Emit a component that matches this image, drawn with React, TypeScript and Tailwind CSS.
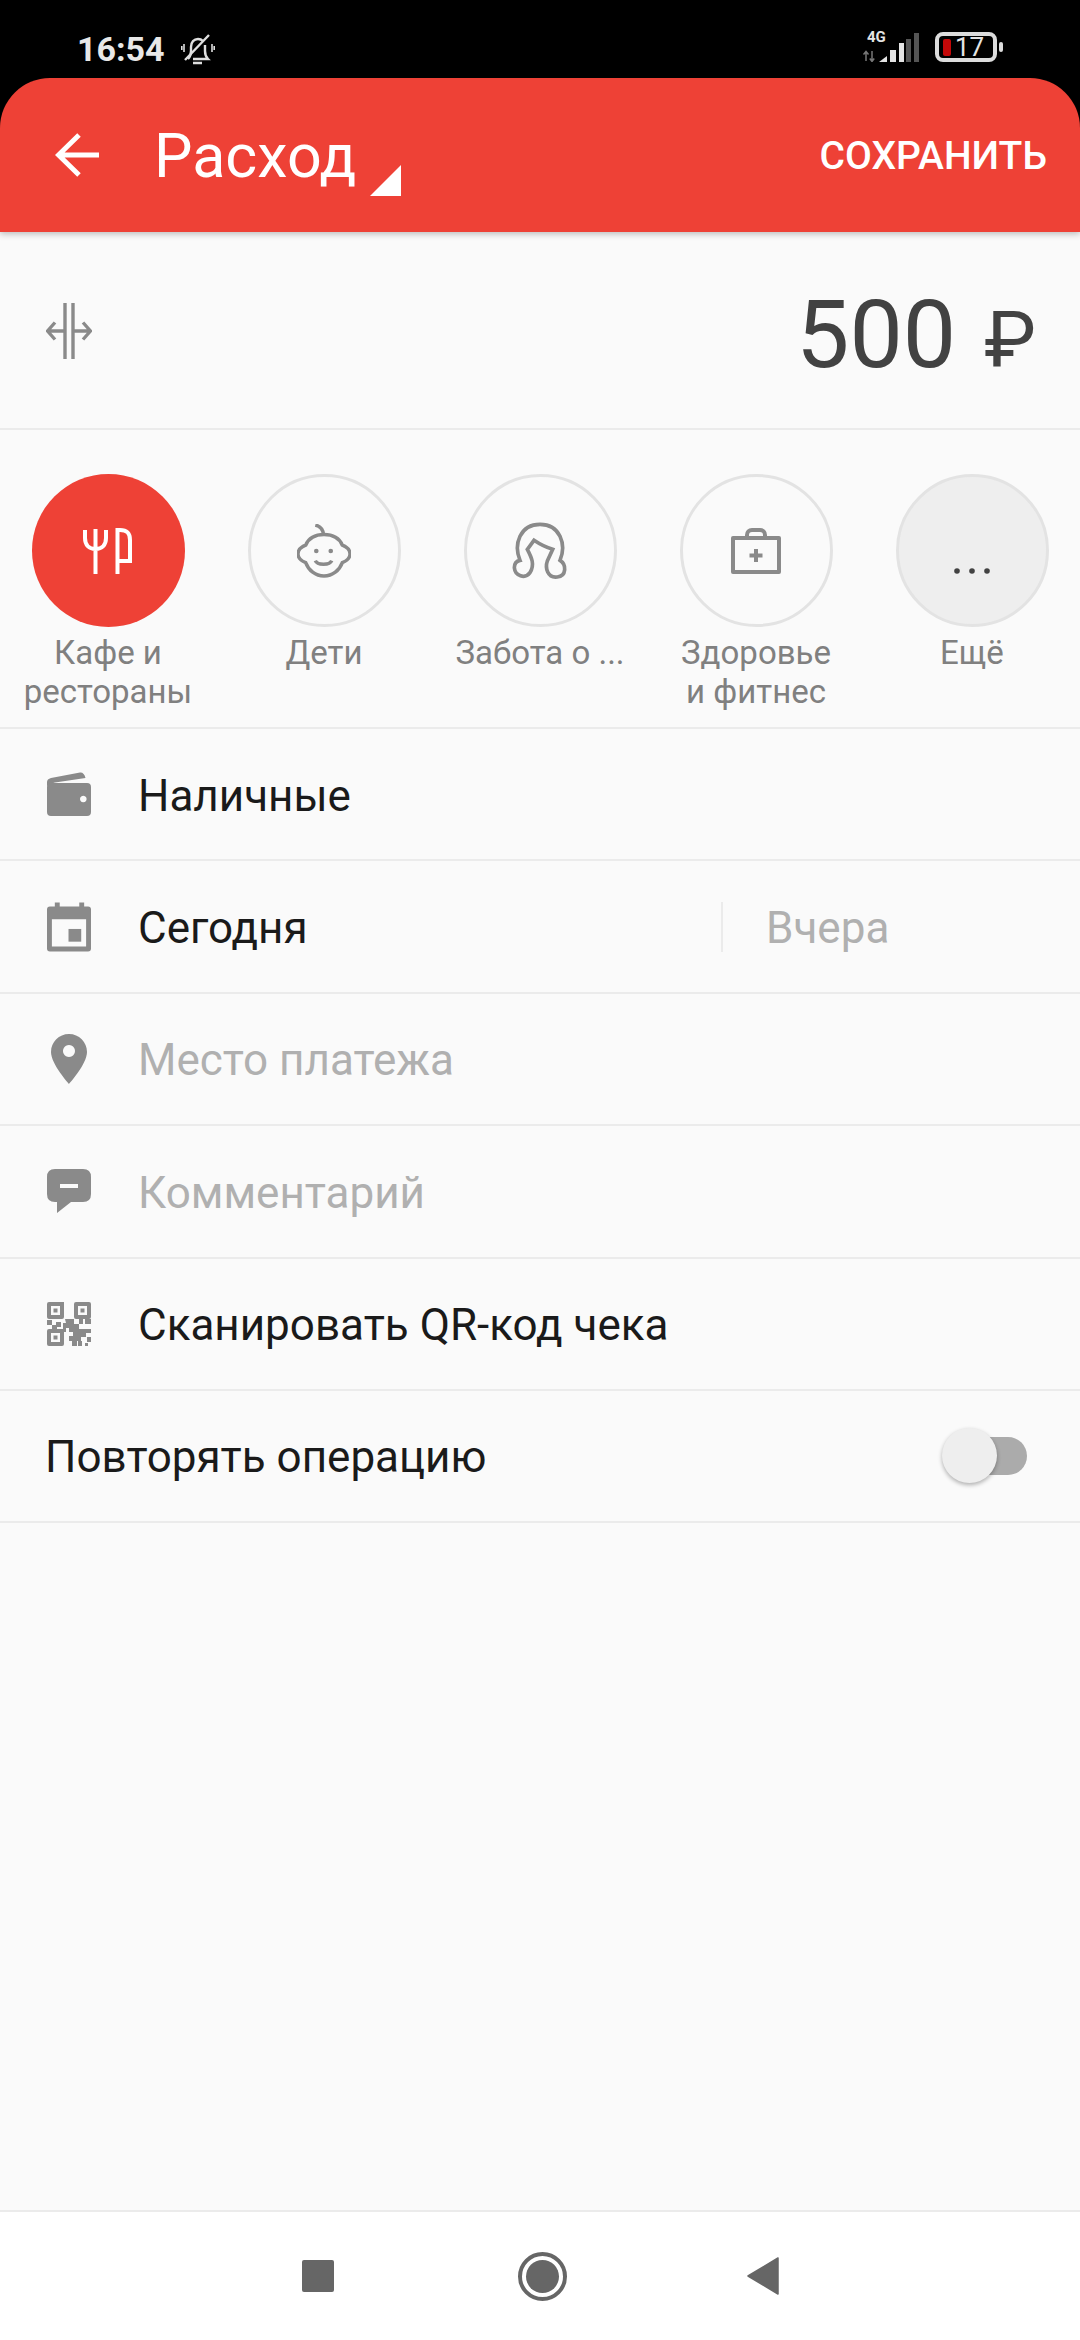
import type { ReactNode } from 'react';

const Back = () => (
  <svg width="44" height="44" viewBox="0 0 44 44" fill="none" stroke="#fff" strokeWidth="5">
    <path d="M44 22H4M24 2L3.5 22L24 42" />
  </svg>
);

const BellMuted = () => (
  <svg width="34" height="33" viewBox="0 0 34 33" fill="none" stroke="#dedede" strokeWidth="2.4">
    <path d="M7 26c2-2 3-4 3-8v-4c0-5 3-8 7-8 2 0 4 1 5 2M24 12v6c0 4 1 6 3 8H12" />
    <path d="M12 30h9M4 27L28 2" />
    <path d="M3 11v8M0.8 13v4M31 11v8M33.2 13v4" strokeWidth="1.6" />
  </svg>
);

const Signal = () => (
  <svg width="58" height="29" viewBox="0 0 58 29" className="block">
    <path d="M4 19v9M1.5 21.5L4 18.5l2.5 3" stroke="#777" strokeWidth="1.5" fill="none" />
    <path d="M10 18v10M7.8 25.5L10 28.5l2.2-3" stroke="#777" strokeWidth="1.5" fill="none" />
    <path d="M17 29l8-6v6z" fill="#e4e4e4" />
    <rect x="28" y="17" width="6" height="12" fill="#e4e4e4" />
    <rect x="37" y="10" width="5" height="19" fill="#e4e4e4" />
    <rect x="44" y="6" width="5" height="23" fill="#555" />
    <rect x="52" y="0" width="5" height="29" fill="#555" />
  </svg>
);

const Battery = () => (
  <div className="flex items-center gap-[2px]">
    <div className="flex h-[30px] w-[62px] items-center rounded-[8px] border-[4px] border-[#dcdcdc] pl-[4px]">
      <div className="h-[17px] w-[8px] rounded-[2px] bg-[#c40808]" />
      <span className="ml-[4px] text-[26px] leading-none text-[#e4e4e4]">17</span>
    </div>
    <div className="h-[10px] w-[4px] rounded-full bg-[#dcdcdc]" />
  </div>
);

const SplitIcon = () => (
  <svg width="46" height="56" viewBox="0 0 46 56" fill="none" stroke="#8a8a8a" strokeWidth="3.4" className="mt-[2px]">
    <path d="M19 0v56M27 0v56" />
    <path d="M1 28h17M9 19.5L1.5 28L9 36.5M28 28h17M37 19.5L44.5 28L37 36.5" />
  </svg>
);

const Cutlery = () => (
  <svg width="50" height="46" viewBox="0 0 50 46" fill="none" stroke="#fff" strokeWidth="4">
    <path d="M2 2v8c0 7 4 11 10.500 11S23 17 23 10V2M12.500 1v45" />
    <path d="M34.500 46V2H37c7 0 10 3 10 10v21H35" />
  </svg>
);

const Baby = () => (
  <svg width="54" height="54" viewBox="0 0 56 56" fill="none" stroke="#8a8a8a" strokeWidth="3.600">
    <path d="M19 1c4 1 8 4 8.500 10" />
    <path d="M9 22c3-7 10-11 19-11s16 4 19 11c5 2 8 5 8 9s-3 7-8 9c-3 8-10 14-19 14S12 48 9 40c-5-2-8-5-8-9s3-7 8-9z" />
    <path d="M19 38c2 5 15 5 17 0" />
    <circle cx="20" cy="28" r="2.400" fill="#8a8a8a" stroke="none" />
    <circle cx="35" cy="28" r="2.400" fill="#8a8a8a" stroke="none" />
  </svg>
);

const Care = () => (
  <svg width="60" height="60" viewBox="120 60 180 180" fill="none" stroke="#8a8a8a" strokeWidth="11">
    <path d="M150 178C130 130 150 70 210 70C270 70 290 130 270 178C290 190 290 225 262 228C232 232 225 200 232 180L248 145C230 140 210 130 192 118L172 145C185 170 195 190 180 215C165 235 135 225 133 200C133 185 140 180 150 178Z" />
  </svg>
);

const Kit = () => (
  <svg width="50" height="46" viewBox="0 0 50 46" fill="none" stroke="#8a8a8a" strokeWidth="4">
    <path d="M2 10h46v34H2z" strokeLinejoin="round" />
    <path d="M16 10V7c0-3 2-5 5-5h8c3 0 5 2 5 5v3" />
    <path d="M25 21v13M18.500 27.500h13" />
  </svg>
);

const Dots = () => (
  <svg width="36" height="6" viewBox="0 0 36 6" className="mt-[40px]">
    <circle cx="3" cy="3" r="2.800" fill="#424242" />
    <circle cx="18" cy="3" r="2.800" fill="#424242" />
    <circle cx="33" cy="3" r="2.800" fill="#424242" />
  </svg>
);

const Wallet = () => (
  <svg width="44" height="44" viewBox="0 0 44 44">
    <path d="M0 14v-4q0-3 4-4L33 .5q4-.5 5.500 5.500L8 10.500Q3 11 0 14z" fill="#8a8a8a" />
    <path
      fillRule="evenodd"
      d="M4 11h36q4 0 4 4v25q0 4-4 4H4q-4 0-4-4V15q0-4 4-4zM36.300 23.700a3.300 3.300 0 1 0 .01 0z"
      fill="#8a8a8a"
    />
  </svg>
);

const CalendarIcon = () => (
  <svg width="45" height="50" viewBox="0 0 45 50">
    <path
      fillRule="evenodd"
      d="M8 0h5v4h20V0h5v4h4q3 0 3 3v40q0 3-3 3H3q-3 0-3-3V7q0-3 3-3h5zM5 17v28h35V17z"
      fill="#8a8a8a"
    />
    <rect x="22" y="27" width="13" height="13" fill="#8a8a8a" />
  </svg>
);

const Pin = () => (
  <svg width="36" height="50" viewBox="0 0 36 50">
    <path
      fillRule="evenodd"
      d="M18 0C8 0 0 8 0 18c0 12 18 32 18 32s18-20 18-32C36 8 28 0 18 0zM18 11a6 6 0 1 1-.01 0z"
      fill="#8a8a8a"
    />
  </svg>
);

const Comment = () => (
  <svg width="44" height="44" viewBox="0 0 44 44">
    <path
      fillRule="evenodd"
      d="M8 0h28q8 0 8 8v17q0 8-8 8H24L10 44V33H8q-8 0-8-8V8q0-8 8-8zM13 15v4h18v-4z"
      fill="#8a8a8a"
    />
  </svg>
);

const Qr = () => (
  <svg width="44" height="44" viewBox="0 0 44 44" fill="#8a8a8a">
    <path fillRule="evenodd" d="M2 0h15v15q0 2-2 2H2q-2 0-2-2V2q0-2 2-2zM4 4v9h9V4zM6.500 6.500h4v4h-4z" />
    <path fillRule="evenodd" d="M29 0h13q2 0 2 2v13q0 2-2 2H29q-2 0-2-2V2q0-2 2-2zM31 4v9h9V4zM33.500 6.500h4v4h-4z" />
    <path fillRule="evenodd" d="M2 27h15v15q0 2-2 2H2q-2 0-2-2V29q0-2 2-2zM4 31v9h9v-9zM6.500 33.500h4v4h-4z" />
    <path d="M0 18h5v5H0zM9 20h5v5H9zM5 23h5v4H5zM18 17h9v5h5v-5h4v5h-4v5h12v4h-5v4h-5v4h-4v5h-5v-5h-3v-5h4v-4h-4v-4h-3v4h-3v-9h3z" />
    <path d="M38 17h6v5h-6zM40 35h4v5h-4zM31 39h4v5h-4zM38 41h3v3h-3z" />
  </svg>
);

const cats: { label: ReactNode; icon: ReactNode; className: string }[] = [
  { label: <>Кафе и<br />рестораны</>, icon: <Cutlery />, className: 'bg-[#ee4136]' },
  { label: 'Дети', icon: <Baby />, className: 'border-[3px] border-[#e3e3e3]' },
  { label: 'Забота о ...', icon: <Care />, className: 'border-[3px] border-[#e3e3e3]' },
  { label: <>Здоровье<br />и фитнес</>, icon: <Kit />, className: 'border-[3px] border-[#e3e3e3]' },
  { label: 'Ещё', icon: <Dots />, className: 'border-[3px] border-[#e3e3e3] bg-[#eeeeee]' },
];

function Row({ icon, children }: { icon: ReactNode; children: ReactNode }) {
  return (
    <div className="flex h-[132.4px] items-center border-b-2 border-[#ebebeb]">
      <div className="flex w-[138px] shrink-0 justify-center">
        <div className="flex w-[44px] justify-center">{icon}</div>
      </div>
      {children}
    </div>
  );
}

export default function App() {
  return (
    <div className="flex h-[2340px] w-[1080px] flex-col overflow-hidden bg-black font-[Roboto,sans-serif]">
      <div className="flex h-[78px] shrink-0 items-start justify-between pl-[77px] pr-[77px] pt-[32px]">
        <div className="flex items-center gap-[16px]">
          <span className="text-[34px] font-bold leading-[34px] text-[#e8e8e8]">16:54</span>
          <BellMuted />
        </div>
        <div className="relative flex items-center gap-[15px]">
          <span className="absolute left-[5px] top-[-2px] text-[15px] font-bold leading-[15px] text-[#e4e4e4]">4G</span>
          <Signal />
          <Battery />
        </div>
      </div>

      <div className="relative z-10 flex h-[154px] shrink-0 items-center rounded-t-[50px] bg-[#ee4136] pl-[55px] pr-[33px] shadow-[0_2px_6px_rgba(0,0,0,0.25)]">
        <Back />
        <span className="ml-[55px] mt-[3px] text-[61px] leading-none text-white">Расход</span>
        <div className="ml-[14px] mt-[50px] h-0 w-0 border-b-[31px] border-l-[31px] border-b-white border-l-transparent" />
        <span className="ml-auto mt-[3px] text-[39px] font-medium leading-none text-white">СОХРАНИТЬ</span>
      </div>

      <div className="flex flex-1 flex-col bg-[#fafafa]">
        <div className="flex h-[198px] shrink-0 items-center justify-between border-b-2 border-[#ebebeb] pl-[46px] pr-[44px]">
          <SplitIcon />
          <div className="mt-[8px] flex items-baseline text-[#424242]">
            <span className="text-[95px] leading-none">500</span>
            <span className="ml-[28px] text-[78px] leading-none">₽</span>
          </div>
        </div>

        <div className="grid h-[299px] shrink-0 grid-cols-5 border-b-2 border-[#ebebeb] pt-[44px]">
          {cats.map((cat, i) => (
            <div key={i} className="flex flex-col items-center">
              <div className={`flex h-[153px] w-[153px] items-center justify-center rounded-full ${cat.className}`}>
                {cat.icon}
              </div>
              <div className="mt-[6px] text-center text-[33px] leading-[39px] text-[#808080]">{cat.label}</div>
            </div>
          ))}
        </div>

        <Row icon={<Wallet />}>
          <span className="mt-[3px] text-[44px] text-[#1a1a1a]">Наличные</span>
        </Row>
        <Row icon={<CalendarIcon />}>
          <span className="mt-[3px] text-[44px] text-[#1a1a1a]">Сегодня</span>
          <div className="ml-auto h-[50px] w-[2px] bg-[#ebebeb]" />
          <span className="ml-[43px] mt-[3px] w-[314px] text-[44px] text-[#b0b0b0]">Вчера</span>
        </Row>
        <Row icon={<Pin />}>
          <span className="mt-[3px] text-[44px] text-[#b0b0b0]">Место платежа</span>
        </Row>
        <Row icon={<Comment />}>
          <span className="mt-[3px] text-[44px] text-[#b0b0b0]">Комментарий</span>
        </Row>
        <Row icon={<Qr />}>
          <span className="mt-[3px] text-[44px] text-[#1a1a1a]">Сканировать QR-код чека</span>
        </Row>
        <div className="flex h-[132.4px] items-center justify-between border-b-2 border-[#ebebeb] pl-[45px] pr-[53px]">
          <span className="mt-[2px] text-[44px] text-[#1a1a1a]">Повторять операцию</span>
          <div className="relative h-[56px] w-[85px]">
            <div className="absolute right-0 top-[9px] h-[38px] w-[70px] rounded-full bg-[#ababab]" />
            <div className="absolute left-0 top-0 h-[55px] w-[55px] rounded-full bg-[#eeeeee] shadow-[0_2px_4px_rgba(0,0,0,0.3)]" />
          </div>
        </div>
      </div>

      <div className="flex h-[130px] shrink-0 items-center justify-center border-t-2 border-[#ebebeb] bg-white">
        <div className="h-[32px] w-[32px] rounded-[2px] bg-[#666666]" />
        <div className="ml-[184px] flex h-[49px] w-[49px] items-center justify-center rounded-full border-[4px] border-[#666666]">
          <div className="h-[33px] w-[33px] rounded-full bg-[#666666]" />
        </div>
        <svg width="32" height="38" viewBox="0 0 32 38" className="ml-[180px]">
          <path d="M31 1v36L1 19z" fill="#666666" stroke="#666666" strokeWidth="1.500" strokeLinejoin="round" />
        </svg>
      </div>
    </div>
  );
}
